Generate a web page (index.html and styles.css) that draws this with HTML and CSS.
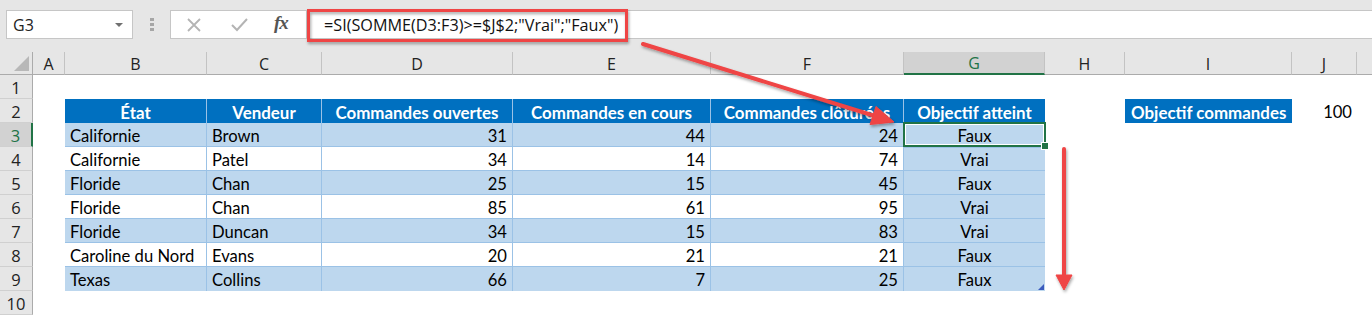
FILE: index.html
```html
<!DOCTYPE html>
<html lang="fr">
<head>
<meta charset="utf-8">
<title>Excel – SI SOMME</title>
<link rel="stylesheet" href="styles.css">
</head>
<body>
<div class="app">
  <div class="topbar">
    <div class="fbar">
      <div class="namebox"><span>G3</span><span class="dd"></span></div>
      <div class="grip"><i></i><i></i><i></i></div>
      <div class="iconbox">
        <svg class="ico-x" width="16" height="16" viewBox="0 0 16 16"><path d="M2 2L14 14M14 2L2 14" stroke="#b4b4b4" stroke-width="1.8" fill="none"/></svg>
        <svg class="ico-ok" width="18" height="14" viewBox="0 0 18 14"><path d="M1 7L6 12L16 1" stroke="#b4b4b4" stroke-width="2" fill="none"/></svg>
        <span class="fx">fx</span>
      </div>
      <div class="formula">=SI(SOMME(D3:F3)&gt;=$J$2;"Vrai";"Faux")</div>
    </div>
  </div>

  <div class="sheet">
    <div class="corner"><span class="tri"></span></div>
    <div class="ch">A</div><div class="ch">B</div><div class="ch">C</div><div class="ch">D</div><div class="ch">E</div><div class="ch">F</div><div class="ch sel">G</div><div class="ch">H</div><div class="ch">I</div><div class="ch">J</div><div class="ch last"></div>

    <div class="rh">1</div><div class="empty full"></div>

    <div class="rh">2</div><div class="empty"></div>
    <div class="th">État</div><div class="th">Vendeur</div><div class="th">Commandes ouvertes</div><div class="th">Commandes en cours</div><div class="th">Commandes clôturées</div><div class="th lastc">Objectif atteint</div>
    <div class="empty"></div><div class="lbl">Objectif commandes</div><div class="val">100</div><div class="empty"></div>

    <div class="rh sel">3</div><div class="empty"></div>
    <div class="td b">Californie</div><div class="td b">Brown</div><div class="td b n">31</div><div class="td b n">44</div><div class="td b n">24</div><div class="td b c g3">Faux</div><div class="empty rest"></div>

    <div class="rh">4</div><div class="empty"></div>
    <div class="td w">Californie</div><div class="td w">Patel</div><div class="td w n">34</div><div class="td w n">14</div><div class="td w n">74</div><div class="td b c">Vrai</div><div class="empty rest"></div>

    <div class="rh">5</div><div class="empty"></div>
    <div class="td b">Floride</div><div class="td b">Chan</div><div class="td b n">25</div><div class="td b n">15</div><div class="td b n">45</div><div class="td b c">Faux</div><div class="empty rest"></div>

    <div class="rh">6</div><div class="empty"></div>
    <div class="td w">Floride</div><div class="td w">Chan</div><div class="td w n">85</div><div class="td w n">61</div><div class="td w n">95</div><div class="td b c">Vrai</div><div class="empty rest"></div>

    <div class="rh">7</div><div class="empty"></div>
    <div class="td b">Floride</div><div class="td b">Duncan</div><div class="td b n">34</div><div class="td b n">15</div><div class="td b n">83</div><div class="td b c">Vrai</div><div class="empty rest"></div>

    <div class="rh">8</div><div class="empty"></div>
    <div class="td w">Caroline du Nord</div><div class="td w">Evans</div><div class="td w n">20</div><div class="td w n">21</div><div class="td w n">21</div><div class="td b c">Faux</div><div class="empty rest"></div>

    <div class="rh">9</div><div class="empty"></div>
    <div class="td b end">Texas</div><div class="td b end">Collins</div><div class="td b n end">66</div><div class="td b n end">7</div><div class="td b n end">25</div><div class="td b c end tail">Faux</div><div class="empty rest"></div>

    <div class="rh">10</div><div class="empty full"></div>
  </div>

  <svg class="annot" width="1372" height="316" viewBox="0 0 1372 316">
    <defs>
      <filter id="sh" x="-10%" y="-10%" width="130%" height="130%">
        <feDropShadow dx="1" dy="2" stdDeviation="1.4" flood-color="#000" flood-opacity="0.35"/>
      </filter>
    </defs>
    <rect x="308.5" y="10.5" width="318" height="30" fill="none" stroke="#ef4444" stroke-width="3" filter="url(#sh)"/>
    <g filter="url(#sh)" fill="#ef4444" stroke="#ef4444">
      <line x1="643" y1="44" x2="875" y2="116" stroke-width="4" stroke-linecap="round"/>
      <polygon points="894,122 870,124.5 876,106.5" stroke-width="1"/>
      <line x1="1064" y1="149" x2="1064" y2="277" stroke-width="4" stroke-linecap="round"/>
      <polygon points="1056,275 1072,275 1064,290" stroke-width="1"/>
    </g>
  </svg>
</div>
</body>
</html>
```

FILE: styles.css
```css
* { box-sizing: border-box; }
html, body { margin: 0; padding: 0; }
body { background: #ffffff; width: 1372px; height: 316px; overflow: hidden; }
.app { position: relative; width: 1372px; height: 316px; }

.topbar {
  height: 52px;
  background: #e6e6e6;
  padding-top: 10px;
}
.fbar { display: flex; height: 29px; }
.namebox {
  margin-left: 6px;
  width: 127px;
  background: #fff;
  border: 1px solid #c6c6c6;
  display: flex;
  align-items: center;
  justify-content: space-between;
  padding: 0 9px 0 6px;
  font-family: "Open Sans", "Noto Sans", sans-serif;
  font-size: 16px;
  color: #222;
}
.dd {
  width: 0; height: 0;
  border-left: 4px solid transparent;
  border-right: 4px solid transparent;
  border-top: 4px solid #707070;
}
.grip {
  width: 37px;
  display: flex;
  flex-direction: column;
  align-items: center;
  justify-content: center;
  gap: 2px;
}
.grip i { display: block; width: 4px; height: 3px; background: #a6a6a6; }
.iconbox {
  width: 137px;
  background: #fff;
  border: 1px solid #c6c6c6;
  display: flex;
  align-items: center;
  padding-left: 15px;
}
.ico-x { margin-right: 29px; }
.ico-ok { margin-right: 25px; }
.fx {
  font-family: "Liberation Serif", serif;
  font-style: italic;
  font-weight: 700;
  font-size: 19px;
  color: #555;
  letter-spacing: -1px;
  margin-top: -3px;
}
.formula {
  flex: 1;
  background: #fff;
  border-top: 1px solid #c6c6c6;
  border-bottom: 1px solid #c6c6c6;
  display: flex;
  align-items: center;
  padding-left: 17px;
  font-family: "Open Sans", "Noto Sans", sans-serif;
  font-size: 16.2px;
  color: #111;
}

.sheet {
  display: grid;
  grid-template-columns: 33px 32px 142px 115px 191px 198px 193px 141px 80px 167px 65px 1fr;
  grid-template-rows: 23px repeat(10, 24px);
  font-family: "Lato", "Open Sans", sans-serif;
  font-size: 16.6px;
  color: #000;
}
.corner {
  background: #e6e6e6;
  border-right: 1px solid #ababab;
  border-bottom: 1px solid #ababab;
  position: relative;
}
.tri {
  position: absolute;
  right: 3px; bottom: 3px;
  width: 0; height: 0;
  border-left: 15px solid transparent;
  border-bottom: 15px solid #b8b8b8;
}
.ch {
  background: #e6e6e6;
  border-right: 1px solid #c3c3c3;
  border-bottom: 1px solid #ababab;
  display: flex;
  align-items: center;
  justify-content: center;
  font-family: "Open Sans", "Noto Sans", sans-serif;
  font-size: 16px;
  color: #222;
  padding-top: 1px;
}
.ch.last { border-right: none; }
.ch.sel {
  background: #d2d2d2;
  color: #217346;
  border-bottom: 2px solid #217346;
}
.rh {
  grid-column: 1;
  background: #e6e6e6;
  border-right: 1px solid #ababab;
  border-bottom: 1px solid #d0d0d0;
  display: flex;
  align-items: center;
  justify-content: center;
  font-family: "Open Sans", "Noto Sans", sans-serif;
  font-size: 16.5px;
  color: #222;
  padding-top: 2px;
}
.rh.sel {
  background: #d2d2d2;
  color: #217346;
  border-right: 2px solid #217346;
}
.empty { background: #fff; }
.empty.full { grid-column: 2 / -1; }
.empty.rest { grid-column: 9 / -1; }

.th {
  background: #0070c0;
  color: #fff;
  font-weight: 700;
  font-size: 16.9px;
  display: flex;
  align-items: center;
  justify-content: center;
  padding-top: 2px;
  border-right: 1px solid #9bc2e6;
  white-space: nowrap;
  overflow: visible;
}
.th.lastc { border-right: none; }
.lbl {
  background: #0070c0;
  color: #fff;
  font-weight: 700;
  font-size: 16.9px;
  display: flex;
  align-items: center;
  padding: 2px 0 0 6px;
  white-space: nowrap;
}
.val {
  display: flex;
  align-items: center;
  justify-content: flex-end;
  padding: 2px 5px 0 0;
}
.td {
  display: flex;
  align-items: center;
  padding: 2px 5px 0;
  border-right: 1px solid #9bc2e6;
  border-bottom: 1px solid #9bc2e6;
  white-space: nowrap;
}
.td.b { background: #bdd7ee; }
.td.w { background: #ffffff; }
.td.n { justify-content: flex-end; }
.td.c { justify-content: center; border-right: none; }
.td.end { border-bottom: none; }
.g3 {
  position: relative;
  box-shadow: inset 0 0 0 2px #217346, inset 0 0 0 3px #ffffff;
  margin: -1px -1px -1px -1px;
}
.g3::after {
  content: "";
  position: absolute;
  right: -3px;
  bottom: -3px;
  width: 6px;
  height: 6px;
  background: #217346;
  border: 1px solid #fff;
}
.tail { position: relative; }
.tail::after {
  content: "";
  position: absolute;
  right: 1px;
  bottom: 1px;
  width: 6px;
  height: 6px;
  background: #3b5bbd;
  clip-path: polygon(100% 0, 100% 100%, 0 100%);
}

.annot {
  position: absolute;
  left: 0;
  top: 0;
  pointer-events: none;
}
```
